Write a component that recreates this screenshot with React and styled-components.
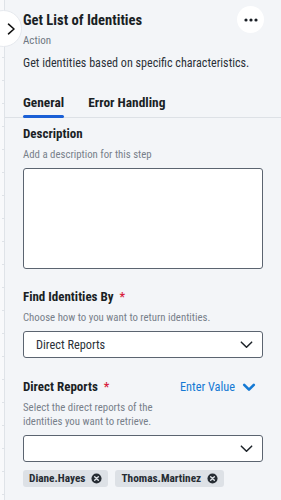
import React from "react";
import styled, { createGlobalStyle } from "styled-components";

const GlobalStyle = createGlobalStyle`
  html, body {
    margin: 0;
    padding: 0;
    background: #f3f5f8;
  }
  body {
    font-family: "Roboto Condensed", Roboto, sans-serif;
    color: #1d2329;
  }
  * {
    box-sizing: border-box;
  }
`;

const Page = styled.div`
  display: flex;
  width: 281px;
  height: 500px;
  overflow: hidden;
  position: relative;
  background: #f3f5f8;
`;

const Rail = styled.div`
  width: 5px;
  flex-shrink: 0;
  background: #f8f9fb;
  border-right: 1px solid #dfe3e8;
  background-image: repeating-linear-gradient(
    to bottom,
    transparent 0,
    transparent 22px,
    #dfe3e8 22px,
    #dfe3e8 23px
  );
  background-size: 3px 100%;
  background-repeat: no-repeat;
  background-position: 2px 12px;
`;

const ToggleButton = styled.button`
  position: absolute;
  left: -15px;
  top: 10px;
  width: 37px;
  height: 37px;
  border-radius: 50%;
  border: 1px solid #e6e9ee;
  background: #fff;
  padding: 0 0 0 15px;
  display: flex;
  align-items: center;
  justify-content: center;
  cursor: pointer;
`;

const Panel = styled.div`
  flex: 1;
  display: flex;
  flex-direction: column;
  min-width: 0;
`;

const Header = styled.div`
  display: flex;
  justify-content: space-between;
  align-items: flex-start;
  padding: 8px 17px 0 18px;
`;

const TitleBlock = styled.div`
  display: flex;
  flex-direction: column;
  padding-top: 2px;
`;

const Title = styled.h1`
  margin: 0;
  font-size: 14.6px;
  font-weight: 700;
  line-height: 21px;
  color: #1a1f25;
`;

const Kind = styled.div`
  font-size: 11px;
  line-height: 14px;
  margin-top: 3px;
  color: #6f7782;
`;

const MoreButton = styled.button`
  width: 27px;
  height: 27px;
  margin-top: -2px;
  border-radius: 50%;
  border: none;
  background: #fff;
  display: flex;
  align-items: center;
  justify-content: center;
  padding: 0;
  cursor: pointer;
`;

const Summary = styled.p`
  margin: 7px 0 0;
  padding: 0 18px;
  font-size: 12.1px;
  line-height: 16px;
  color: #2b3138;
  white-space: nowrap;
`;

const Tabs = styled.div`
  display: flex;
  gap: 24px;
  padding: 0 18px;
  margin-top: 24px;
  border-bottom: 1px solid #dde1e6;
`;

const Tab = styled.div`
  font-size: 13.4px;
  font-weight: 700;
  line-height: 16px;
  padding-bottom: 6px;
  color: #1a1f25;
  position: relative;
  &::after {
    content: "";
    display: ${(p) => (p.$active ? "block" : "none")};
    position: absolute;
    left: 0;
    right: 0;
    bottom: -1px;
    height: 3px;
    border-radius: 2px;
    background: #1a5fd6;
  }
`;

const Body = styled.div`
  display: flex;
  flex-direction: column;
  padding: 8px 18px 0;
`;

const Field = styled.div`
  display: flex;
  flex-direction: column;
  margin-bottom: ${(p) => p.$gap || 0}px;
`;

const LabelRow = styled.div`
  display: flex;
  justify-content: space-between;
  align-items: center;
`;

const Label = styled.div`
  font-size: 13px;
  font-weight: 700;
  line-height: 16px;
  color: #1a1f25;
`;

const Required = styled.span`
  color: #d81f3f;
  font-size: 12px;
  margin-left: 6px;
`;

const Help = styled.div`
  font-size: 10.8px;
  line-height: 14px;
  color: #78808a;
  margin-top: 6px;
  max-width: ${(p) => (p.$narrow ? "140px" : "none")};
`;

const TextArea = styled.div`
  height: 101px;
  margin-top: 6px;
  background: #fff;
  border: 1px solid #5b6470;
  border-radius: 3px;
`;

const Select = styled.div`
  height: 27px;
  margin-top: 6px;
  background: #fff;
  border: 1px solid #5b6470;
  border-radius: 3px;
  display: flex;
  align-items: center;
  justify-content: space-between;
  padding: 0 8px 0 12px;
  font-size: 12.3px;
  color: #2b3138;
`;

const EnterValue = styled.div`
  display: flex;
  align-items: center;
  gap: 7px;
  color: #1479d4;
  font-size: 12.3px;
  padding-right: 7px;
`;

const Chips = styled.div`
  display: flex;
  gap: 7px;
  margin-top: 8px;
`;

const Chip = styled.div`
  display: flex;
  align-items: center;
  gap: 6px;
  height: 17px;
  padding: 0 6px;
  border-radius: 3px;
  background: #dde1e6;
  font-size: 11.3px;
  font-weight: 700;
  color: #262c33;
`;

const Chevron = ({ size = 14, color = "#1d2329", weight = 1.6 }) => (
  <svg width={size} height={size} viewBox="0 0 16 16" fill="none">
    <path d="M2.5 5.5 8 11l5.5-5.5" stroke={color} strokeWidth={weight} strokeLinecap="round" strokeLinejoin="round" />
  </svg>
);

const RemoveIcon = () => (
  <svg width="11" height="11" viewBox="0 0 12 12">
    <circle cx="6" cy="6" r="5.5" fill="#262c33" />
    <path d="M4 4l4 4M8 4l-4 4" stroke="#dde1e6" strokeWidth="1.5" strokeLinecap="round" />
  </svg>
);

const App = () => (
  <>
    <GlobalStyle />
    <Page>
      <Rail />
      <ToggleButton aria-label="Collapse">
        <svg width="9" height="12" viewBox="0 0 9 12" fill="none">
          <path d="M1.5 1.2 7 6l-5.5 4.8" stroke="#111" strokeWidth="1.6" strokeLinecap="round" strokeLinejoin="round" />
        </svg>
      </ToggleButton>
      <Panel>
        <Header>
          <TitleBlock>
            <Title>Get List of Identities</Title>
            <Kind>Action</Kind>
          </TitleBlock>
          <MoreButton aria-label="More">
            <svg width="14" height="4" viewBox="0 0 14 4">
              <circle cx="2" cy="2" r="1.6" fill="#1a1f25" />
              <circle cx="7" cy="2" r="1.6" fill="#1a1f25" />
              <circle cx="12" cy="2" r="1.6" fill="#1a1f25" />
            </svg>
          </MoreButton>
        </Header>
        <Summary>Get identities based on specific characteristics.</Summary>
        <Tabs>
          <Tab $active>General</Tab>
          <Tab>Error Handling</Tab>
        </Tabs>
        <Body>
          <Field $gap={20}>
            <Label>Description</Label>
            <Help>Add a description for this step</Help>
            <TextArea />
          </Field>
          <Field $gap={21}>
            <Label>
              Find Identities By<Required>*</Required>
            </Label>
            <Help>Choose how to you want to return identities.</Help>
            <Select>
              Direct Reports
              <Chevron size={15} />
            </Select>
          </Field>
          <Field>
            <LabelRow>
              <Label>
                Direct Reports<Required>*</Required>
              </Label>
              <EnterValue>
                Enter Value
                <Chevron size={14} color="#1479d4" weight={3} />
              </EnterValue>
            </LabelRow>
            <Help $narrow>Select the direct reports of the identities you want to retrieve.</Help>
            <Select>
              <span />
              <Chevron size={15} />
            </Select>
            <Chips>
              <Chip>
                Diane.Hayes
                <RemoveIcon />
              </Chip>
              <Chip>
                Thomas.Martinez
                <RemoveIcon />
              </Chip>
            </Chips>
          </Field>
        </Body>
      </Panel>
    </Page>
  </>
);

export default App;
